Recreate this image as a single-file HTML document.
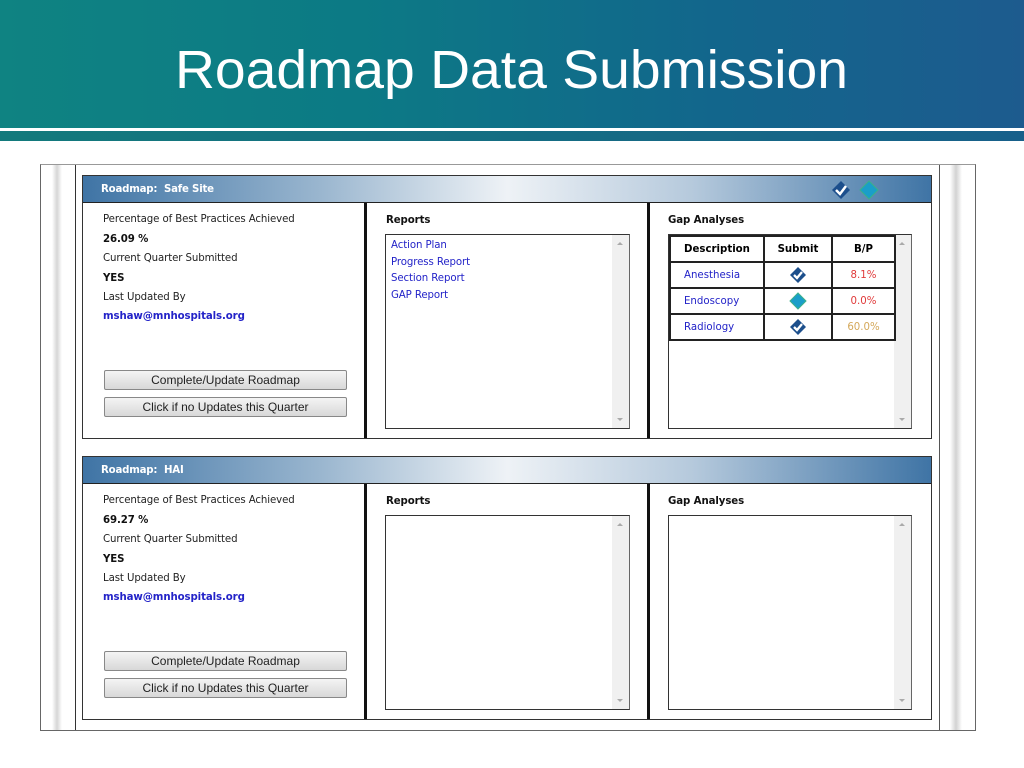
<!DOCTYPE html>
<html><head><meta charset="utf-8"><style>
*{margin:0;padding:0;box-sizing:border-box}
body{width:1024px;height:768px;position:relative;background:#fff;overflow:hidden;font-family:"DejaVu Sans","Liberation Sans",sans-serif;}
.a{position:absolute}
.hdr{left:0;top:0;width:1024px;height:128px;background:linear-gradient(90deg,#0f8382 0%,#0c7a85 35%,#12668c 70%,#1d5b8e 100%)}
.band{left:0;top:131px;width:1024px;height:10px;background:linear-gradient(90deg,#137a7c,#17608a)}
.t{font-size:10.2px;color:#222;white-space:nowrap;letter-spacing:-0.1px}
.b{font-weight:bold;color:#111}
.lnk{color:#2323c8}
.btn{width:243px;height:20px;border:1px solid #888;border-radius:2px;background:linear-gradient(#f4f4f4,#d8d8d8);font-family:"Liberation Sans",sans-serif;font-size:12px;color:#222;text-align:center;line-height:18px}
.box{border:1px solid #333;border-right-color:#666;background:#fff}
.sb{position:absolute;right:0;top:0;width:17px;height:100%;background:#f0f0f0}
.sb:before{content:"";position:absolute;left:5px;top:7px;border:3px solid transparent;border-bottom:3px solid #aaa;border-top:none}
.sb:after{content:"";position:absolute;left:5px;bottom:7px;border:3px solid transparent;border-top:3px solid #aaa;border-bottom:none}
.ph{height:27px;border-bottom:1px solid #222;background:linear-gradient(90deg,#3f74a5 0%,#9ab6cf 28%,#eef2f6 50%,#b5c9dc 72%,#3f74a5 100%);color:#fff;font-weight:bold;font-size:10.2px;padding-left:18px;line-height:27px;letter-spacing:-0.2px}
table{border-collapse:collapse;font-size:10.2px}
td{border:2px solid #222;text-align:center;height:26px;padding:0}
</style></head><body>
<div class="a hdr"></div>
<div class="a" style="left:0;top:128px;width:1024px;height:3px;background:#fff"></div>
<div class="a band"></div>
<svg class="a" style="left:0;top:0" width="1024" height="128"><text x="175" y="88" font-family="Liberation Sans,sans-serif" font-size="54" fill="#fff" textLength="673" lengthAdjust="spacingAndGlyphs">Roadmap Data Submission</text></svg>

<div class="a" style="left:40px;top:164px;width:936px;height:567px;border:1px solid #666;border-top-color:#999"></div>
<div class="a" style="left:52px;top:165px;width:10px;height:565px;background:linear-gradient(90deg,#fff,#d6d6d6,#fff)"></div>
<div class="a" style="left:75px;top:165px;width:1px;height:565px;background:#333"></div>
<div class="a" style="left:939px;top:165px;width:1px;height:565px;background:#555"></div>
<div class="a" style="left:950px;top:165px;width:12px;height:565px;background:linear-gradient(90deg,#fff,#d2d2d2,#fff)"></div>

<!-- panel 1 -->
<div class="a" style="left:82px;top:175px;width:850px;height:264px;border:1px solid #333"></div>
<div class="a ph" style="left:83px;top:176px;width:848px">Roadmap:&nbsp; Safe Site</div>
<svg class="a" style="left:831px;top:180px" width="50" height="20">
<path d="M10 1 L19 10 L10 19 L1 10Z" fill="#1c4f8c"/><path d="M5 10 L9 14 L15 6" stroke="#fff" stroke-width="2.5" fill="none"/>
<path d="M38 1 L47 10 L38 19 L29 10Z" fill="#1a9ec9" stroke="#3bb08a" stroke-width="1"/></svg>
<div class="a" style="left:364px;top:203px;width:3px;height:235px;background:#111"></div>
<div class="a" style="left:647px;top:203px;width:3px;height:235px;background:#111"></div>
<div class="a t" style="left:103px;top:214px">Percentage of Best Practices Achieved</div>
<div class="a t b" style="left:103px;top:234px">26.09 %</div>
<div class="a t" style="left:103px;top:253px">Current Quarter Submitted</div>
<div class="a t b" style="left:103px;top:273px">YES</div>
<div class="a t" style="left:103px;top:292px">Last Updated By</div>
<div class="a t b lnk" style="left:103px;top:311px">mshaw@mnhospitals.org</div>
<div class="a btn" style="left:104px;top:370px">Complete/Update Roadmap</div>
<div class="a btn" style="left:104px;top:397px">Click if no Updates this Quarter</div>
<div class="a t b" style="left:386px;top:215px">Reports</div>
<div class="a box" style="left:385px;top:234px;width:245px;height:195px"><div class="sb"></div></div>
<div class="a t lnk" style="left:391px;top:240px">Action Plan</div>
<div class="a t lnk" style="left:391px;top:257px">Progress Report</div>
<div class="a t lnk" style="left:391px;top:273px">Section Report</div>
<div class="a t lnk" style="left:391px;top:290px">GAP Report</div>
<div class="a t b" style="left:668px;top:215px">Gap Analyses</div>
<div class="a box" style="left:668px;top:234px;width:244px;height:195px"><div class="sb"></div></div>
<table class="a" style="left:669px;top:235px;width:227px">
<tr style="font-weight:bold"><td style="width:94px;height:23px">Description</td><td style="width:68px">Submit</td><td>B/P</td></tr>
<tr><td class="lnk" style="text-align:left;padding-left:13px;height:26px">Anesthesia</td><td><svg width="18" height="18" style="display:block;margin:auto"><path d="M9 1 L17 9 L9 17 L1 9Z" fill="#1c4f8c"/><path d="M5 9 L8 12 L13 6" stroke="#fff" stroke-width="2.3" fill="none"/></svg></td><td style="color:#e03a3a">8.1%</td></tr>
<tr><td class="lnk" style="text-align:left;padding-left:13px;height:26px">Endoscopy</td><td><svg width="18" height="18" style="display:block;margin:auto"><path d="M9 1 L17 9 L9 17 L1 9Z" fill="#1a9ec9" stroke="#3bb08a"/></svg></td><td style="color:#e03a3a">0.0%</td></tr>
<tr><td class="lnk" style="text-align:left;padding-left:13px;height:25px">Radiology</td><td><svg width="18" height="18" style="display:block;margin:auto"><path d="M9 1 L17 9 L9 17 L1 9Z" fill="#1c4f8c"/><path d="M5 9 L8 12 L13 6" stroke="#fff" stroke-width="2.3" fill="none"/></svg></td><td style="color:#d4a85a">60.0%</td></tr>
</table>

<!-- panel 2 -->
<div class="a" style="left:82px;top:456px;width:850px;height:264px;border:1px solid #333"></div>
<div class="a ph" style="left:83px;top:457px;width:848px">Roadmap:&nbsp; HAI</div>
<div class="a" style="left:364px;top:484px;width:3px;height:235px;background:#111"></div>
<div class="a" style="left:647px;top:484px;width:3px;height:235px;background:#111"></div>
<div class="a t" style="left:103px;top:495px">Percentage of Best Practices Achieved</div>
<div class="a t b" style="left:103px;top:515px">69.27 %</div>
<div class="a t" style="left:103px;top:534px">Current Quarter Submitted</div>
<div class="a t b" style="left:103px;top:554px">YES</div>
<div class="a t" style="left:103px;top:573px">Last Updated By</div>
<div class="a t b lnk" style="left:103px;top:592px">mshaw@mnhospitals.org</div>
<div class="a btn" style="left:104px;top:651px">Complete/Update Roadmap</div>
<div class="a btn" style="left:104px;top:678px">Click if no Updates this Quarter</div>
<div class="a t b" style="left:386px;top:496px">Reports</div>
<div class="a box" style="left:385px;top:515px;width:245px;height:195px"><div class="sb"></div></div>
<div class="a t b" style="left:668px;top:496px">Gap Analyses</div>
<div class="a box" style="left:668px;top:515px;width:244px;height:195px"><div class="sb"></div></div>
</body></html>
